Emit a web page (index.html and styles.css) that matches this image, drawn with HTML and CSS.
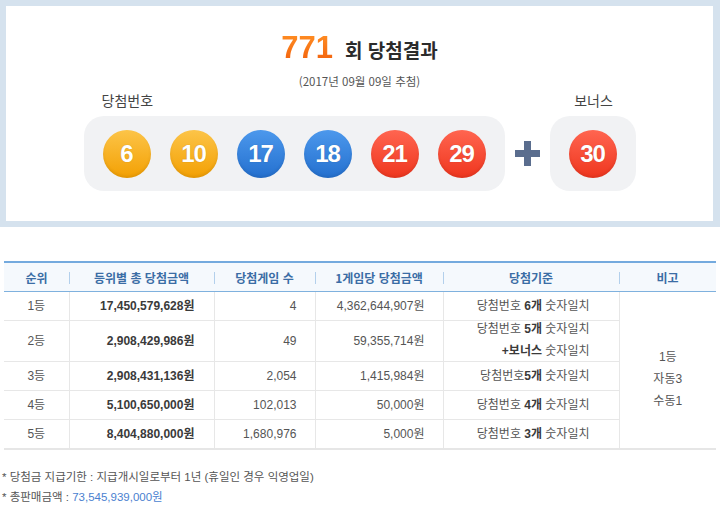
FILE: index.html
```html
<!DOCTYPE html>
<html lang="ko">
<head>
<meta charset="utf-8">
<title>771회 당첨결과</title>
<link rel="stylesheet" href="styles.css">
</head>
<body>
<section class="result">
  <h2 class="title"><span class="round">771</span><span class="title-text">회 당첨결과</span></h2>
  <p class="date">(2017년 09월 09일 추첨)</p>
  <div class="draw">
    <div class="group group-main">
      <div class="label">당첨번호</div>
      <div class="balls">
        <span class="ball yellow">6</span>
        <span class="ball yellow">10</span>
        <span class="ball blue">17</span>
        <span class="ball blue">18</span>
        <span class="ball red">21</span>
        <span class="ball red">29</span>
      </div>
    </div>
    <div class="plus">
      <svg width="25" height="25" viewBox="0 0 25 25"><rect x="9" y="0" width="7" height="25" fill="#5a6d8e"/><rect x="0" y="9" width="25" height="7" fill="#5a6d8e"/></svg>
    </div>
    <div class="group group-bonus">
      <div class="label">보너스</div>
      <div class="balls">
        <span class="ball red">30</span>
      </div>
    </div>
  </div>
</section>

<table class="prize">
  <colgroup>
    <col class="c1"><col class="c2"><col class="c3"><col class="c4"><col class="c5"><col class="c6">
  </colgroup>
  <thead>
    <tr>
      <th>순위</th>
      <th>등위별 총 당첨금액</th>
      <th>당첨게임 수</th>
      <th>1게임당 당첨금액</th>
      <th>당첨기준</th>
      <th>비고</th>
    </tr>
  </thead>
  <tbody>
    <tr>
      <td class="rank">1등</td>
      <td class="total">17,450,579,628원</td>
      <td class="num">4</td>
      <td class="num">4,362,644,907원</td>
      <td class="crit">당첨번호 <b>6개</b> 숫자일치</td>
      <td class="note" rowspan="5">1등<br>자동3<br>수동1</td>
    </tr>
    <tr class="tall">
      <td class="rank">2등</td>
      <td class="total">2,908,429,986원</td>
      <td class="num">49</td>
      <td class="num">59,355,714원</td>
      <td class="crit"><div class="two-lines">당첨번호 <b>5개</b> 숫자일치<br><b>+보너스</b> 숫자일치</div></td>
    </tr>
    <tr>
      <td class="rank">3등</td>
      <td class="total">2,908,431,136원</td>
      <td class="num">2,054</td>
      <td class="num">1,415,984원</td>
      <td class="crit">당첨번호<b>5개</b> 숫자일치</td>
    </tr>
    <tr>
      <td class="rank">4등</td>
      <td class="total">5,100,650,000원</td>
      <td class="num">102,013</td>
      <td class="num">50,000원</td>
      <td class="crit">당첨번호 <b>4개</b> 숫자일치</td>
    </tr>
    <tr>
      <td class="rank">5등</td>
      <td class="total">8,404,880,000원</td>
      <td class="num">1,680,976</td>
      <td class="num">5,000원</td>
      <td class="crit">당첨번호 <b>3개</b> 숫자일치</td>
    </tr>
  </tbody>
</table>

<ul class="notes">
  <li>* 당첨금 지급기한 : 지급개시일로부터 1년 (휴일인 경우 익영업일)</li>
  <li>* 총판매금액 : <span class="sales">73,545,939,000원</span></li>
</ul>
</body>
</html>
```

FILE: styles.css
```css
html, body {
  margin: 0;
  padding: 0;
  background: #fff;
}
body {
  font-family: "Liberation Sans", "Noto Sans CJK KR", sans-serif;
  color: #555;
  width: 720px;
}

.result {
  width: 707px;
  border: 6px solid #d5e2ee;
  border-right-width: 7px;
  padding: 27px 0 30px;
  display: flex;
  flex-direction: column;
  align-items: center;
}

.title {
  margin: 0;
  height: 30px;
  display: flex;
  align-items: baseline;
  justify-content: center;
  line-height: 30px;
}
.round {
  font-family: "Liberation Sans", sans-serif;
  font-weight: bold;
  font-size: 31px;
  background: linear-gradient(#ff8f24, #f2600c);
  -webkit-background-clip: text;
  background-clip: text;
  color: transparent;
}
.title-text {
  margin-left: 12px;
  font-family: "Noto Sans CJK KR", sans-serif;
  font-size: 19px;
  font-weight: bold;
  color: #2b2b2b;
}

.date {
  margin: 10px 0 0;
  font-family: "Noto Sans CJK KR", sans-serif;
  font-size: 11.5px;
  line-height: 16px;
  color: #555;
}

.draw {
  margin-top: 2px;
  display: flex;
  align-items: flex-end;
  gap: 10px;
}
.group {
  display: flex;
  flex-direction: column;
}
.label {
  font-family: "Noto Sans CJK KR", sans-serif;
  font-size: 14px;
  line-height: 18px;
  color: #444;
  margin-bottom: 7px;
}
.group-main .label {
  padding-left: 18px;
}
.group-bonus {
  align-items: center;
}
.group-bonus .label {
  padding-left: 2px;
}
.balls {
  display: flex;
  gap: 19px;
  padding: 14px 19px 13px;
  background: #f1f2f4;
  border-radius: 20px;
}
.ball {
  width: 48px;
  height: 48px;
  border-radius: 50%;
  display: flex;
  align-items: center;
  justify-content: center;
  font-family: "Liberation Sans", sans-serif;
  font-weight: bold;
  font-size: 24px;
  letter-spacing: -1px;
  color: #fff;
  text-shadow: 0 0 1px rgba(0,0,0,0.25);
  box-shadow: inset 0 -2px 3px rgba(0,0,0,0.08);
}
.yellow { background: linear-gradient(#fcc448, #f3a003); }
.blue { background: linear-gradient(#4c98ec, #2470cf); }
.red { background: linear-gradient(#ff6550, #ef361e); }

.plus {
  margin-bottom: 25px;
  width: 25px;
  height: 25px;
}
.plus svg { display: block; }

.prize {
  margin: 34px 0 0 4px;
  width: 712px;
  border-collapse: collapse;
  table-layout: fixed;
  font-size: 12px;
}
.c1 { width: 65px; }
.c2 { width: 145px; }
.c3 { width: 101px; }
.c4 { width: 128px; }
.c5 { width: 176px; }
.c6 { width: 97px; }

.prize th {
  position: relative;
  height: 28px;
  padding: 0;
  background: #f5f9fd;
  border-top: 2px solid #74aade;
  border-bottom: 1px solid #7fb1de;
  font-family: "Noto Sans CJK KR", sans-serif;
  font-weight: bold;
  font-size: 12px;
  color: #3b6da5;
  text-align: center;
}
.prize th + th::before {
  content: "";
  position: absolute;
  left: 0;
  top: 9px;
  height: 12px;
  border-left: 1px solid #b3d0ec;
}

.prize td {
  height: 28px;
  padding: 0;
  border-bottom: 1px solid #e7e7e7;
  border-left: 1px solid #e7e7e7;
  line-height: 20px;
  color: #555;
}
.prize td:first-child { border-left: none; }
.prize tr.tall td { height: 40px; }
.two-lines {
  line-height: 22px;
  margin: -3px 0 -1px;
}
.prize tbody tr:last-child td,
.prize td.note { border-bottom: 2px solid #e6e6e6; }

.rank { text-align: center; }
.total {
  text-align: right;
  padding-right: 19px !important;
  font-weight: bold;
  color: #3a3a3a !important;
}
.num {
  text-align: right;
  padding-right: 18px !important;
}
.crit {
  text-align: right;
  padding-right: 29px !important;
}
.crit b { color: #3a3a3a; }
.note {
  text-align: center;
  vertical-align: middle;
  line-height: 22px !important;
  padding-top: 18px !important;
}

.notes {
  list-style: none;
  margin: 17px 0 0 2px;
  padding: 0;
  font-size: 11.5px;
  line-height: 20px;
  color: #555;
}
.sales { color: #4a7fd0; }
```
